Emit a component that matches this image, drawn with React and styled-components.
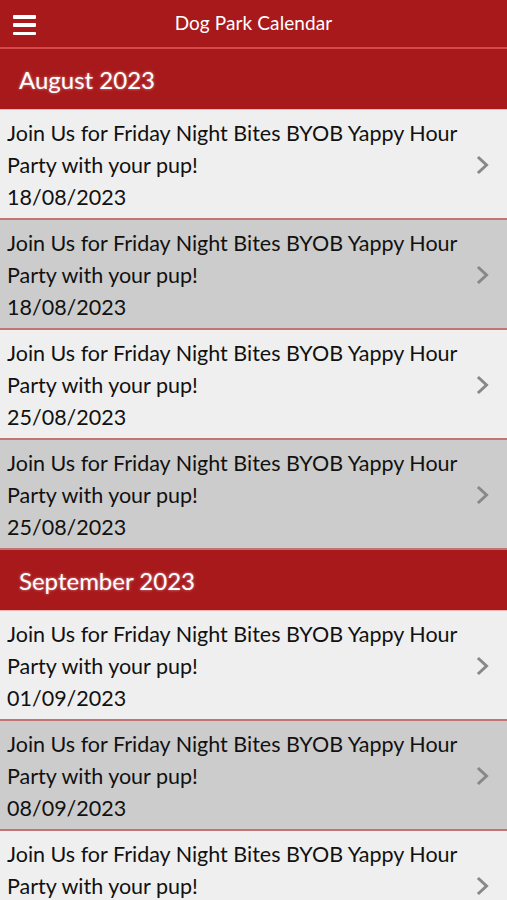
import React from "react";
import styled, { createGlobalStyle } from "styled-components";

const Global = createGlobalStyle`
  html, body { margin: 0; padding: 0; background: #efefef; }
  body { font-family: "Lato", "Open Sans", sans-serif; -webkit-font-smoothing: antialiased; }
`;

const Page = styled.div`
  width: 507px;
  height: 900px;
  overflow: hidden;
  display: flex;
  flex-direction: column;
`;

const TopBar = styled.header`
  height: 47px;
  flex: none;
  background: #a8191b;
  border-bottom: 2px solid #d84646;
  display: flex;
  align-items: center;
  justify-content: center;
  position: relative;
  color: #fff;
  font-size: 19px;
`;

const Burger = styled.button`
  position: absolute;
  left: 13px;
  top: 15px;
  width: 23px;
  height: 20px;
  padding: 0;
  border: 0;
  background: transparent;
  display: flex;
  flex-direction: column;
  justify-content: space-between;
  span {
    display: block;
    height: 3.5px;
    border-radius: 1px;
    background: #fff;
  }
`;

const Title = styled.div`
  margin-top: -3px;
  letter-spacing: 0.1px;
`;

const SectionHead = styled.div`
  height: 60px;
  flex: none;
  background: #a8191b;
  border-bottom: 1px solid #f2b3b3;
  display: flex;
  align-items: center;
  padding-left: 19px;
  color: #fff;
  font-size: 24px;
  text-shadow: 0 0 3px rgba(255, 255, 255, 0.55);
`;

const Row = styled.div`
  height: 108px;
  flex: none;
  box-sizing: content-box;
  background: ${(p) => (p.$alt ? "#cccccc" : "#efefef")};
  border-bottom: 2px solid #c07474;
  display: flex;
  align-items: center;
  padding: 0 17px 0 7px;
`;

const Text = styled.div`
  flex: 1;
  color: #111;
  font-size: 21.5px;
  line-height: 32px;
  padding-top: 1px;
`;

const Chevron = styled.svg`
  width: 14px;
  height: 20px;
  flex: none;
  margin-top: 2px;
`;

const Arrow = () => (
  <Chevron viewBox="0 0 14 20">
    <path d="M3 3 L10.5 10 L3 17" fill="none" stroke="#888" strokeWidth="3" strokeLinecap="square" />
  </Chevron>
);

const title1 = "Join Us for Friday Night Bites BYOB Yappy Hour";
const title2 = "Party with your pup!";

const sections = [
  { month: "August 2023", dates: ["18/08/2023", "18/08/2023", "25/08/2023", "25/08/2023"] },
  { month: "September 2023", dates: ["01/09/2023", "08/09/2023", "15/09/2023"] },
];

export default function App() {
  return (
    <Page>
      <Global />
      <TopBar>
        <Burger aria-label="menu">
          <span />
          <span />
          <span />
        </Burger>
        <Title>Dog Park Calendar</Title>
      </TopBar>
      {sections.map((s) => (
        <React.Fragment key={s.month}>
          <SectionHead>{s.month}</SectionHead>
          {s.dates.map((d, i) => (
            <Row key={i} $alt={i % 2 === 1}>
              <Text>
                {title1}
                <br />
                {title2}
                <br />
                {d}
              </Text>
              <Arrow />
            </Row>
          ))}
        </React.Fragment>
      ))}
    </Page>
  );
}
